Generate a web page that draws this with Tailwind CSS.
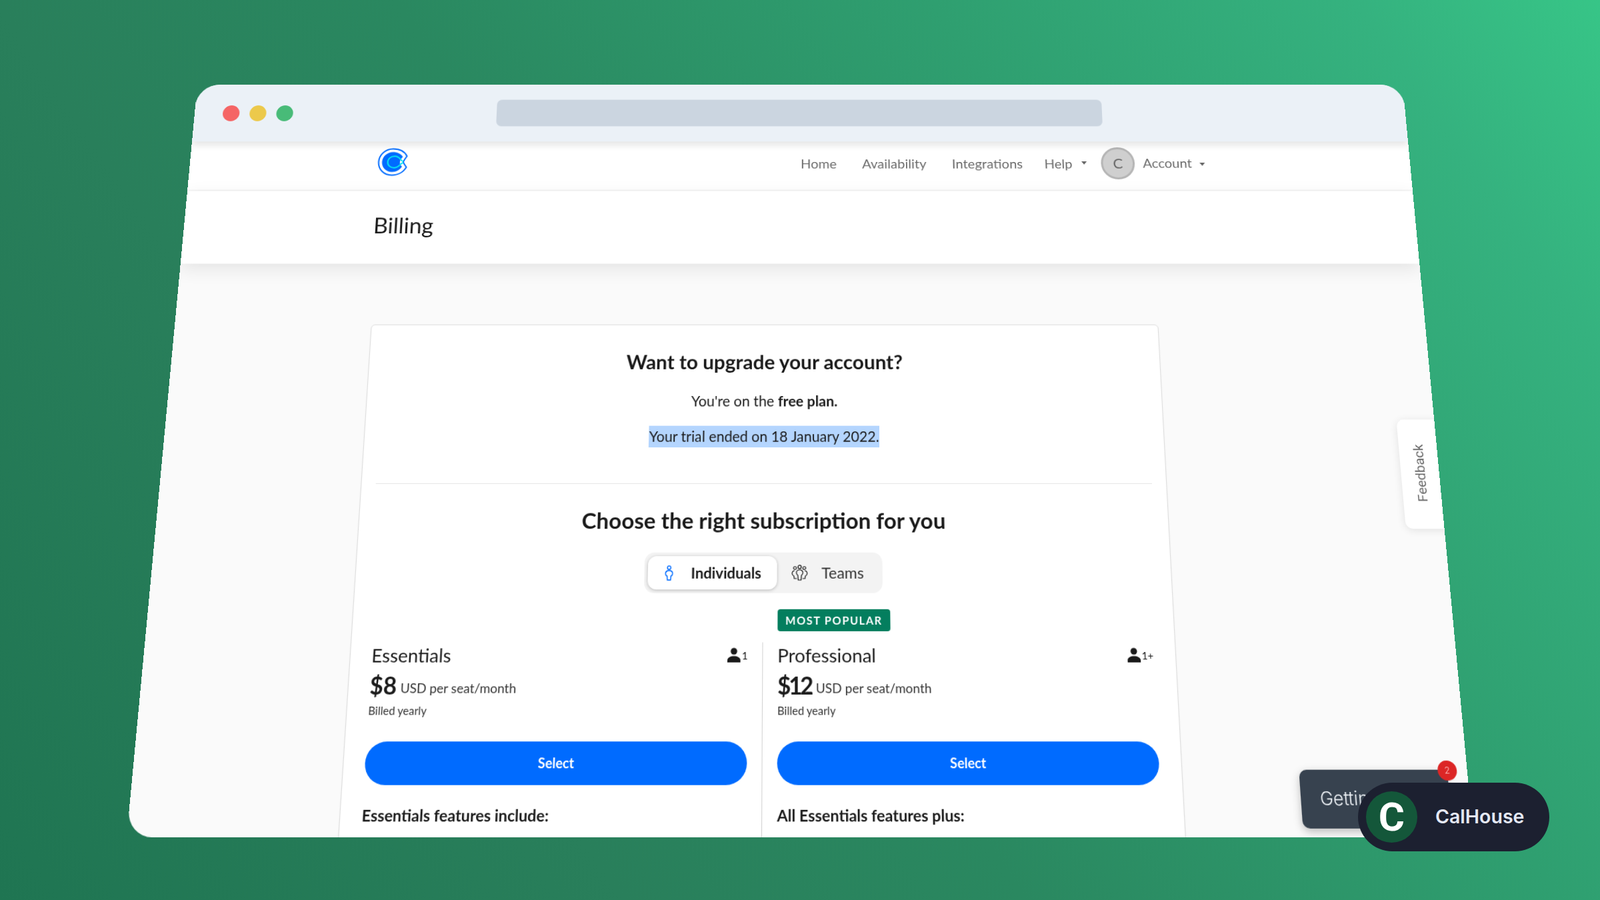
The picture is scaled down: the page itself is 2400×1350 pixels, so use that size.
<!DOCTYPE html>
<html lang="en">
<head>
    <meta charset="UTF-8">
    <meta name="viewport" content="width=device-width, initial-scale=1.0">
    <title>Billing</title>
    <script src="https://cdn.jsdelivr.net/npm/@tailwindcss/browser@4"></script>
</head>
<body class="m-0">
<div class="relative w-[2400px] h-[1350px] overflow-hidden bg-[linear-gradient(55deg,#1f7552_0%,#297f5b_28%,#2a8860_46%,#2f9f70_70%,#35b27f_89%,#37c587_100%)] flex justify-center pt-[127px] font-['Lato',sans-serif]">

    <!-- browser window, tilted -->
    <div class="relative w-[1808px] h-[1075px] shrink-0 flex flex-col overflow-hidden rounded-[34px] bg-[#fafafa] origin-top [transform:perspective(3500px)_rotateX(20deg)]">

        <div class="relative z-20 h-[90px] shrink-0 bg-[#ebf1f7] flex items-center shadow-[0_6px_10px_rgba(0,0,0,0.1)]">
            <div class="flex gap-[15px] ml-[42px]">
                <span class="w-[25px] h-[25px] rounded-full bg-[#f56565]"></span>
                <span class="w-[25px] h-[25px] rounded-full bg-[#ecc94b]"></span>
                <span class="w-[25px] h-[25px] rounded-full bg-[#48bb78]"></span>
            </div>
            <div class="ml-[304px] w-[904px] h-[42px] rounded-[8px] bg-[#cbd5e0]"></div>
        </div>

        <div class="relative z-10 h-[77px] shrink-0 bg-white border-b-2 border-[#f4f4f4] flex items-center pb-[8px] text-[20px] text-[#6b6b6b]">
            <svg class="ml-[278px] shrink-0 -mt-[4px]" width="44" height="44" viewBox="0 0 44 44">
                <path d="M43 13C39 5 31 1.500 22 1.500C10.500 1.500 1.500 10.500 1.500 22C1.500 33.500 10.500 42.500 22 42.500C31 42.500 39 38 43 30C41 27 39 25 38 22C39 19 41 16 43 13Z" fill="none" stroke="#006bff" stroke-width="2"/>
                <path d="M37 14C34 9 28 6.500 22 6.500C13.500 6.500 6.500 13.500 6.500 22C6.500 30.500 13.500 37.500 22 37.500C28 37.500 34 34 36.500 29C34 27 33 25 33 22C33 19 35 16 37 14Z" fill="#006bff"/>
                <path d="M38 21C34 21 33 13 25 13C19 13 15 17 15 22C15 27 19 31 25 31C33 31 34 23 38 23" fill="none" stroke="#0ae8f0" stroke-width="2"/>
            </svg>
            <span class="ml-[583px] w-[54px]">Home</span>
            <span class="ml-[37px] w-[96px]">Availability</span>
            <span class="ml-[37px] w-[105px]">Integrations</span>
            <span class="ml-[32px] w-[43px]">Help</span>
            <span class="ml-[12px] w-0 h-0 border-x-[4px] border-x-transparent border-t-[5px] border-t-[#666]"></span>
            <span class="ml-[21px] w-[50px] h-[50px] rounded-full bg-[#cfcfcf] border-[3px] border-[#b5b5b5] flex items-center justify-center text-[22px] text-[#666]">C</span>
            <span class="ml-[12px] w-[71px] -mt-[2px]">Account</span>
            <span class="ml-[13px] mt-[3px] w-0 h-0 border-x-[4px] border-x-transparent border-t-[5px] border-t-[#666]"></span>
        </div>

        <div class="relative z-10 h-[111px] shrink-0 bg-white flex items-center pl-[278px] pb-[6px] text-[33px] text-[#1a1a1a] shadow-[0_8px_26px_rgba(0,0,0,0.09)]">Billing</div>

        <div class="flex-1 pl-[284px] pt-[91px]">
            <div class="w-[1138px] h-[800px] bg-white border border-[#dedede] rounded-[6px] pt-[36px] shadow-[0_1px_3px_rgba(0,0,0,0.05)] text-[#1a1a1a]">
                <h2 class="h-[36px] leading-[36px] text-center text-[28.500px] font-bold">Want to upgrade your account?</h2>
                <p class="mt-[25px] h-[28px] leading-[28px] text-center text-[20.500px]">You're on the <b>free plan.</b></p>
                <p class="mt-[22px] mx-auto w-fit h-[31px] leading-[31px] bg-[#b4d5fe] text-[20.300px]">Your trial ended on 18 January 2022.</p>
                <div class="mt-[51px] mx-[20px] h-px bg-[#e6e6e6]"></div>
                <h2 class="mt-[31px] h-[40px] leading-[40px] text-center text-[31px] font-bold">Choose the right subscription for you</h2>

                <div class="mt-[25px] mx-auto w-[332px] h-[56px] p-[5px] rounded-[14px] bg-[#f3f3f3] flex items-center text-[20.500px]">
                    <div class="w-[180px] h-[46px] rounded-[12px] bg-white shadow-[0_1px_4px_rgba(0,0,0,0.25)] flex items-center font-bold">
                        <svg class="ml-[23px]" width="13" height="21" viewBox="0 0 13 21" fill="none" stroke="#006bff" stroke-width="1.400">
                            <circle cx="6.500" cy="3" r="2.400"/>
                            <path d="M6.500 7C3.500 7 1.500 8.800 1.500 11.300C1.500 13 2.500 14 3.800 14.500L4.300 20H8.700L9.200 14.500C10.500 14 11.500 13 11.500 11.300C11.500 8.800 9.500 7 6.500 7Z"/>
                        </svg>
                        <span class="ml-[24px]">Individuals</span>
                    </div>
                    <svg class="ml-[20px]" width="23" height="22" viewBox="0 0 23 22" fill="none" stroke="#1a1a1a" stroke-width="1.200">
                        <circle cx="11.500" cy="3" r="2.300"/>
                        <circle cx="5" cy="4.500" r="2"/>
                        <circle cx="18" cy="4.500" r="2"/>
                        <path d="M11.500 7C8.500 7 7 9 7 11C7 13 8.300 14 9 14.500L9.500 21H13.500L14 14.500C14.700 14 16 13 16 11C16 9 14.500 7 11.500 7Z"/>
                        <path d="M4.500 8C2 8.500 1 10.500 1 12C1 14 2.500 15 3.500 15.500L4 19H7.500"/>
                        <path d="M18.500 8C21 8.500 22 10.500 22 12C22 14 20.500 15 19.500 15.500L19 19H15.500"/>
                    </svg>
                    <span class="ml-[19px] text-[21.500px] text-[#333]">Teams</span>
                </div>

                <div class="mt-[22px] ml-[588px] w-[156px] h-[30px] rounded-[4px] bg-[#047e5e] text-white text-[15px] font-bold tracking-[0.1em] flex items-center justify-center">MOST POPULAR</div>

                <div class="mt-[15px] grid grid-cols-[568px_1fr]">
                    <div class="pl-[29px] pr-[20px] border-r border-[#d4d4d4] pb-[40px]">
                        <div class="h-[34px] flex items-center justify-between">
                            <span class="text-[25.500px]">Essentials</span>
                            <span class="flex items-center gap-[2px] text-[14px]">
                                <svg width="18" height="20" viewBox="0 0 18 20" fill="#1a1a1a"><circle cx="9" cy="5" r="4.500"/><path d="M0 20V17C0 13.500 4.500 11.500 9 11.500C13.500 11.500 18 13.500 18 17V20Z"/></svg>1
                            </span>
                        </div>
                        <div class="mt-[4px] h-[40px] flex items-center gap-[5px]">
                            <span class="text-[32px] font-bold">$8</span>
                            <span class="text-[17.500px] mt-[8px] text-[#333]">USD per seat/month</span>
                        </div>
                        <div class="mt-[3px] h-[20px] leading-[20px] text-[15px] text-[#333]">Billed yearly</div>
                        <button class="mt-[31px] w-full h-[57px] rounded-full bg-[#006bff] text-white text-[18px] font-bold">Select</button>
                        <div class="mt-[25px] h-[28px] leading-[28px] text-[21px] font-bold">Essentials features include:</div>
                    </div>
                    <div class="pl-[20px] pr-[30px] pb-[40px]">
                        <div class="h-[34px] flex items-center justify-between">
                            <span class="text-[25.500px]">Professional</span>
                            <span class="flex items-center gap-[2px] text-[14px]">
                                <svg width="18" height="20" viewBox="0 0 18 20" fill="#1a1a1a"><circle cx="9" cy="5" r="4.500"/><path d="M0 20V17C0 13.500 4.500 11.500 9 11.500C13.500 11.500 18 13.500 18 17V20Z"/></svg>1+
                            </span>
                        </div>
                        <div class="mt-[4px] h-[40px] flex items-center gap-[6px]">
                            <span class="text-[32px] font-bold tracking-[-3px]">$12</span>
                            <span class="text-[17.500px] mt-[8px] text-[#333]">USD per seat/month</span>
                        </div>
                        <div class="mt-[3px] h-[20px] leading-[20px] text-[15px] text-[#333]">Billed yearly</div>
                        <button class="mt-[31px] w-full h-[57px] rounded-full bg-[#006bff] text-white text-[18px] font-bold">Select</button>
                        <div class="mt-[25px] h-[28px] leading-[28px] text-[21px] font-bold">All Essentials features plus:</div>
                    </div>
                </div>
            </div>
        </div>

        <!-- feedback tab sits on the right edge -->
        <div class="absolute z-10 left-[1754px] top-[508px] w-[70px] h-[155px] bg-white rounded-l-[10px] shadow-[0_2px_12px_rgba(0,0,0,0.1)] flex items-center justify-center pr-[14px] pb-[3px]">
            <span class="-rotate-90 text-[19px] text-[#666] font-['Roboto',sans-serif] whitespace-nowrap">Feedback</span>
        </div>

        <!-- help tooltip, mostly under the CalHouse pill -->
        <div class="absolute z-30 left-[1580px] top-[988px] w-[201px] h-[76px] bg-[#37424f] rounded-[10px] shadow-[0_4px_12px_rgba(0,0,0,0.25)] flex items-center pl-[26px] text-[24px] font-light text-[#f1f5f9] font-['Inter',sans-serif] whitespace-nowrap">
            Getting started
            <span class="absolute -top-[12px] -right-[13px] w-[26px] h-[26px] rounded-full bg-[#dc2626] text-[#fecaca] text-[12px] flex items-center justify-center">2</span>
        </div>
    </div>

    <!-- badge, not tilted -->
    <div class="absolute left-[2037px] top-[1174px] w-[287px] h-[103px] rounded-full bg-[#1c2030] flex items-center font-['Inter',sans-serif]">
        <div class="ml-[12px] w-[77px] h-[77px] rounded-full bg-[#14573a] flex items-center justify-center text-white text-[60px] font-bold font-['Roboto',sans-serif]">C</div>
        <span class="ml-[27px] text-[28.500px] font-semibold text-[#e5e9f5]">CalHouse</span>
    </div>
</div>
</body>
</html>
